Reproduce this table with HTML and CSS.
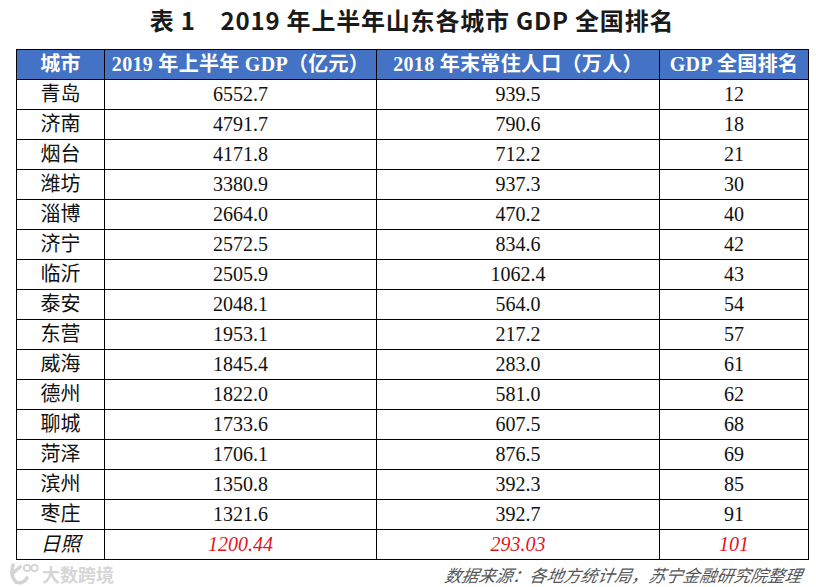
FILE: index.html
```html
<!DOCTYPE html>
<html lang="zh-CN">
<head>
<meta charset="utf-8">
<title>表1 2019年上半年山东各城市GDP全国排名</title>
<link rel="stylesheet" href="styles.css">
</head>
<body>
<div class="page">
  <h1 class="title">表 1　2019 年上半年山东各城市 GDP 全国排名</h1>
  <table class="data">
    <colgroup>
      <col class="c1"><col class="c2"><col class="c3"><col class="c4">
    </colgroup>
    <thead>
      <tr><th>城市</th><th>2019 年上半年 GDP（亿元）</th><th>2018 年末常住人口（万人）</th><th>GDP 全国排名</th></tr>
    </thead>
    <tbody>
      <tr><td>青岛</td><td>6552.7</td><td>939.5</td><td>12</td></tr>
      <tr><td>济南</td><td>4791.7</td><td>790.6</td><td>18</td></tr>
      <tr><td>烟台</td><td>4171.8</td><td>712.2</td><td>21</td></tr>
      <tr><td>潍坊</td><td>3380.9</td><td>937.3</td><td>30</td></tr>
      <tr><td>淄博</td><td>2664.0</td><td>470.2</td><td>40</td></tr>
      <tr><td>济宁</td><td>2572.5</td><td>834.6</td><td>42</td></tr>
      <tr><td>临沂</td><td>2505.9</td><td>1062.4</td><td>43</td></tr>
      <tr><td>泰安</td><td>2048.1</td><td>564.0</td><td>54</td></tr>
      <tr><td>东营</td><td>1953.1</td><td>217.2</td><td>57</td></tr>
      <tr><td>威海</td><td>1845.4</td><td>283.0</td><td>61</td></tr>
      <tr><td>德州</td><td>1822.0</td><td>581.0</td><td>62</td></tr>
      <tr><td>聊城</td><td>1733.6</td><td>607.5</td><td>68</td></tr>
      <tr><td>菏泽</td><td>1706.1</td><td>876.5</td><td>69</td></tr>
      <tr><td>滨州</td><td>1350.8</td><td>392.3</td><td>85</td></tr>
      <tr><td>枣庄</td><td>1321.6</td><td>392.7</td><td>91</td></tr>
      <tr class="hl"><td class="city">日照</td><td>1200.44</td><td>293.03</td><td>101</td></tr>
    </tbody>
  </table>
  <div class="foot">
    <div class="mark">
      <svg class="logo" width="32" height="24" viewBox="0 0 32 24">
        <path d="M5 3 C3 10 4 16 8 20 M8 20 C12 22 17 20 19 16 M4 12 L12 5" fill="none" stroke="#d4d4d4" stroke-width="3.6" stroke-linecap="round"/>
        <circle cx="19" cy="6" r="3.2" fill="none" stroke="#d4d4d4" stroke-width="1.8"/>
        <circle cx="26.5" cy="6" r="3.2" fill="none" stroke="#d4d4d4" stroke-width="1.8"/>
      </svg>
      <span class="mark-text">大数跨境</span>
    </div>
    <div class="source">数据来源：各地方统计局，苏宁金融研究院整理</div>
  </div>
</div>
</body>
</html>
```
FILE: styles.css
```css
html, body {
  margin: 0;
  padding: 0;
  background: #ffffff;
}

.page {
  width: 816px;
  height: 587px;
  overflow: hidden;
}

.title {
  margin: 0;
  height: 49px;
  padding-left: 8px;
  box-sizing: border-box;
  text-align: center;
  font-family: "Noto Sans CJK SC", "Noto Sans", sans-serif;
  font-weight: 700;
  font-size: 24px;
  line-height: 40px;
  letter-spacing: 0.8px;
  color: #1a1a1a;
}

.data {
  margin-left: 16px;
  width: 792px;
  border-collapse: collapse;
  table-layout: fixed;
  font-family: "Liberation Serif", "Noto Sans CJK SC", serif;
  color: #111;
}

.c1 { width: 88px; }
.c2 { width: 272px; }
.c3 { width: 283px; }
.c4 { width: 149px; }

.data th,
.data td {
  border: 1px solid #000;
  height: 29px;
  padding: 0;
  text-align: center;
  vertical-align: middle;
  white-space: nowrap;
}

.data th {
  background: #4472c4;
  color: #ffffff;
  font-weight: 700;
  font-size: 20px;
  line-height: 29px;
  letter-spacing: 0.3px;
}

.data td {
  font-size: 20px;
  line-height: 29px;
}

.data tr.hl td {
  font-style: italic;
  color: #e0161e;
}

.data tr.hl td.city {
  color: #111;
}

.foot {
  display: flex;
  justify-content: space-between;
  align-items: center;
  height: 28px;
  padding: 0 14px 0 8px;
}

.mark {
  display: flex;
  align-items: center;
  gap: 2px;
}

.mark-text {
  font-family: "Noto Sans CJK SC", sans-serif;
  font-weight: 700;
  font-size: 18px;
  color: #d6d6d6;
}

.source {
  font-family: "Noto Sans CJK SC", sans-serif;
  font-style: italic;
  font-size: 17px;
  color: #555;
  transform: skewX(-10deg);
}
```
